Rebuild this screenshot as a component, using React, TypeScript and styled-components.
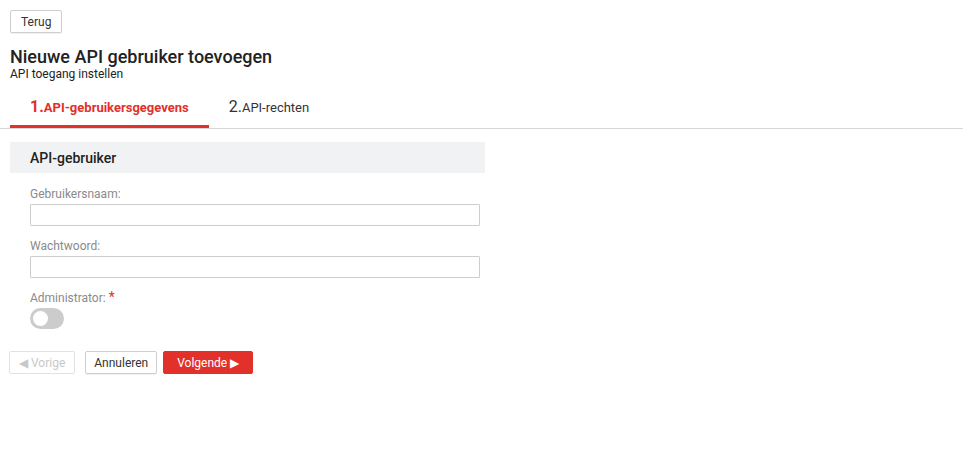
import React from "react";
import styled, { createGlobalStyle } from "styled-components";

const Global = createGlobalStyle`
  html, body { margin: 0; padding: 0; background: #fff; }
  body { font-family: Roboto, "Liberation Sans", Arial, sans-serif; color: #222; }
  * { box-sizing: border-box; }
`;

const Page = styled.div`
  padding: 10px;
`;

const Button = styled.button<{ $variant?: "default" | "primary" | "disabled"; $px?: number; $mr?: number }>`
  display: inline-flex;
  align-items: center;
  justify-content: center;
  height: 23px;
  padding: 0 ${(p) => p.$px ?? 8}px;
  margin-right: ${(p) => p.$mr ?? 0}px;
  font-family: Roboto, "Liberation Sans", Arial, sans-serif;
  font-size: 12px;
  line-height: 14px;
  border-radius: 2px;
  cursor: pointer;
  border: 1px solid
    ${(p) => (p.$variant === "primary" ? "#e2302a" : p.$variant === "disabled" ? "#e2e2e2" : "#cfcfcf")};
  background: ${(p) => (p.$variant === "primary" ? "#e2302a" : "#fff")};
  color: ${(p) => (p.$variant === "primary" ? "#fff" : p.$variant === "disabled" ? "#c8c8c8" : "#333")};
  box-shadow: ${(p) => (p.$variant === "default" ? "0 1px 1px rgba(0,0,0,0.06)" : "none")};
`;

const Title = styled.h1`
  margin: 13px 0 0;
  font-size: 18px;
  line-height: 21px;
  font-weight: 500;
  color: #222;
`;

const Subtitle = styled.div`
  font-size: 12px;
  line-height: 14px;
  color: #222;
`;

const TabBar = styled.div`
  display: flex;
  margin: 10px -10px 0;
  padding-left: 10px;
  border-bottom: 1px solid #d6d6d6;
`;

const Tab = styled.div<{ $active?: boolean }>`
  padding: 6px 20px 7px;
  line-height: 20px;
  font-size: 13px;
  font-weight: ${(p) => (p.$active ? 700 : 400)};
  color: ${(p) => (p.$active ? "#e2302a" : "#333")};
  border-bottom: 3px solid ${(p) => (p.$active ? "#e2302a" : "transparent")};
`;

const TabNum = styled.span`
  font-size: 16px;
  font-weight: inherit;
`;

const Section = styled.div`
  width: 475px;
  margin-top: 13px;
`;

const SectionHeader = styled.div`
  height: 31px;
  display: flex;
  align-items: center;
  padding-left: 20px;
  background: #f1f2f4;
  font-size: 14px;
  font-weight: 500;
  color: #222;
`;

const SectionBody = styled.div`
  padding: 13px 5px 0 20px;
  display: flex;
  flex-direction: column;
  gap: 12px;
`;

const Field = styled.div`
  display: flex;
  flex-direction: column;
  gap: 2px;
`;

const Label = styled.label`
  font-size: 12px;
  line-height: 16px;
  color: #8a8a8a;
`;

const Required = styled.span`
  color: #e2302a;
  font-size: 14px;
  margin-left: 3px;
  vertical-align: top;
  line-height: 14px;
`;

const Input = styled.input`
  width: 450px;
  height: 22px;
  border: 1px solid #cdcdcd;
  border-radius: 1px;
  padding: 0 5px;
  font-size: 12px;
  outline: none;
`;

const Toggle = styled.div`
  width: 34px;
  height: 21px;
  border-radius: 11px;
  background: #cccccc;
  display: flex;
  align-items: center;
  padding-left: 3px;
`;

const Knob = styled.div`
  width: 15px;
  height: 15px;
  border-radius: 50%;
  background: #fff;
`;

const Actions = styled.div`
  display: flex;
  margin-top: 22px;
  margin-left: -1px;
`;

export default function App() {
  return (
    <>
      <Global />
      <Page>
        <Button $variant="default" $px={10}>Terug</Button>
        <Title>Nieuwe API gebruiker toevoegen</Title>
        <Subtitle>API toegang instellen</Subtitle>
        <TabBar>
          <Tab $active>
            <TabNum>1.</TabNum>API-gebruikersgegevens
          </Tab>
          <Tab>
            <TabNum>2.</TabNum>API-rechten
          </Tab>
        </TabBar>
        <Section>
          <SectionHeader>API-gebruiker</SectionHeader>
          <SectionBody>
            <Field>
              <Label>Gebruikersnaam:</Label>
              <Input type="text" />
            </Field>
            <Field>
              <Label>Wachtwoord:</Label>
              <Input type="password" />
            </Field>
            <Field>
              <Label>
                Administrator:<Required>*</Required>
              </Label>
              <Toggle>
                <Knob />
              </Toggle>
            </Field>
          </SectionBody>
        </Section>
        <Actions>
          <Button $variant="disabled" $px={9} $mr={10}>◀ Vorige</Button>
          <Button $variant="default" $px={8} $mr={6}>Annuleren</Button>
          <Button $variant="primary" $px={13}>Volgende ▶</Button>
        </Actions>
      </Page>
    </>
  );
}
